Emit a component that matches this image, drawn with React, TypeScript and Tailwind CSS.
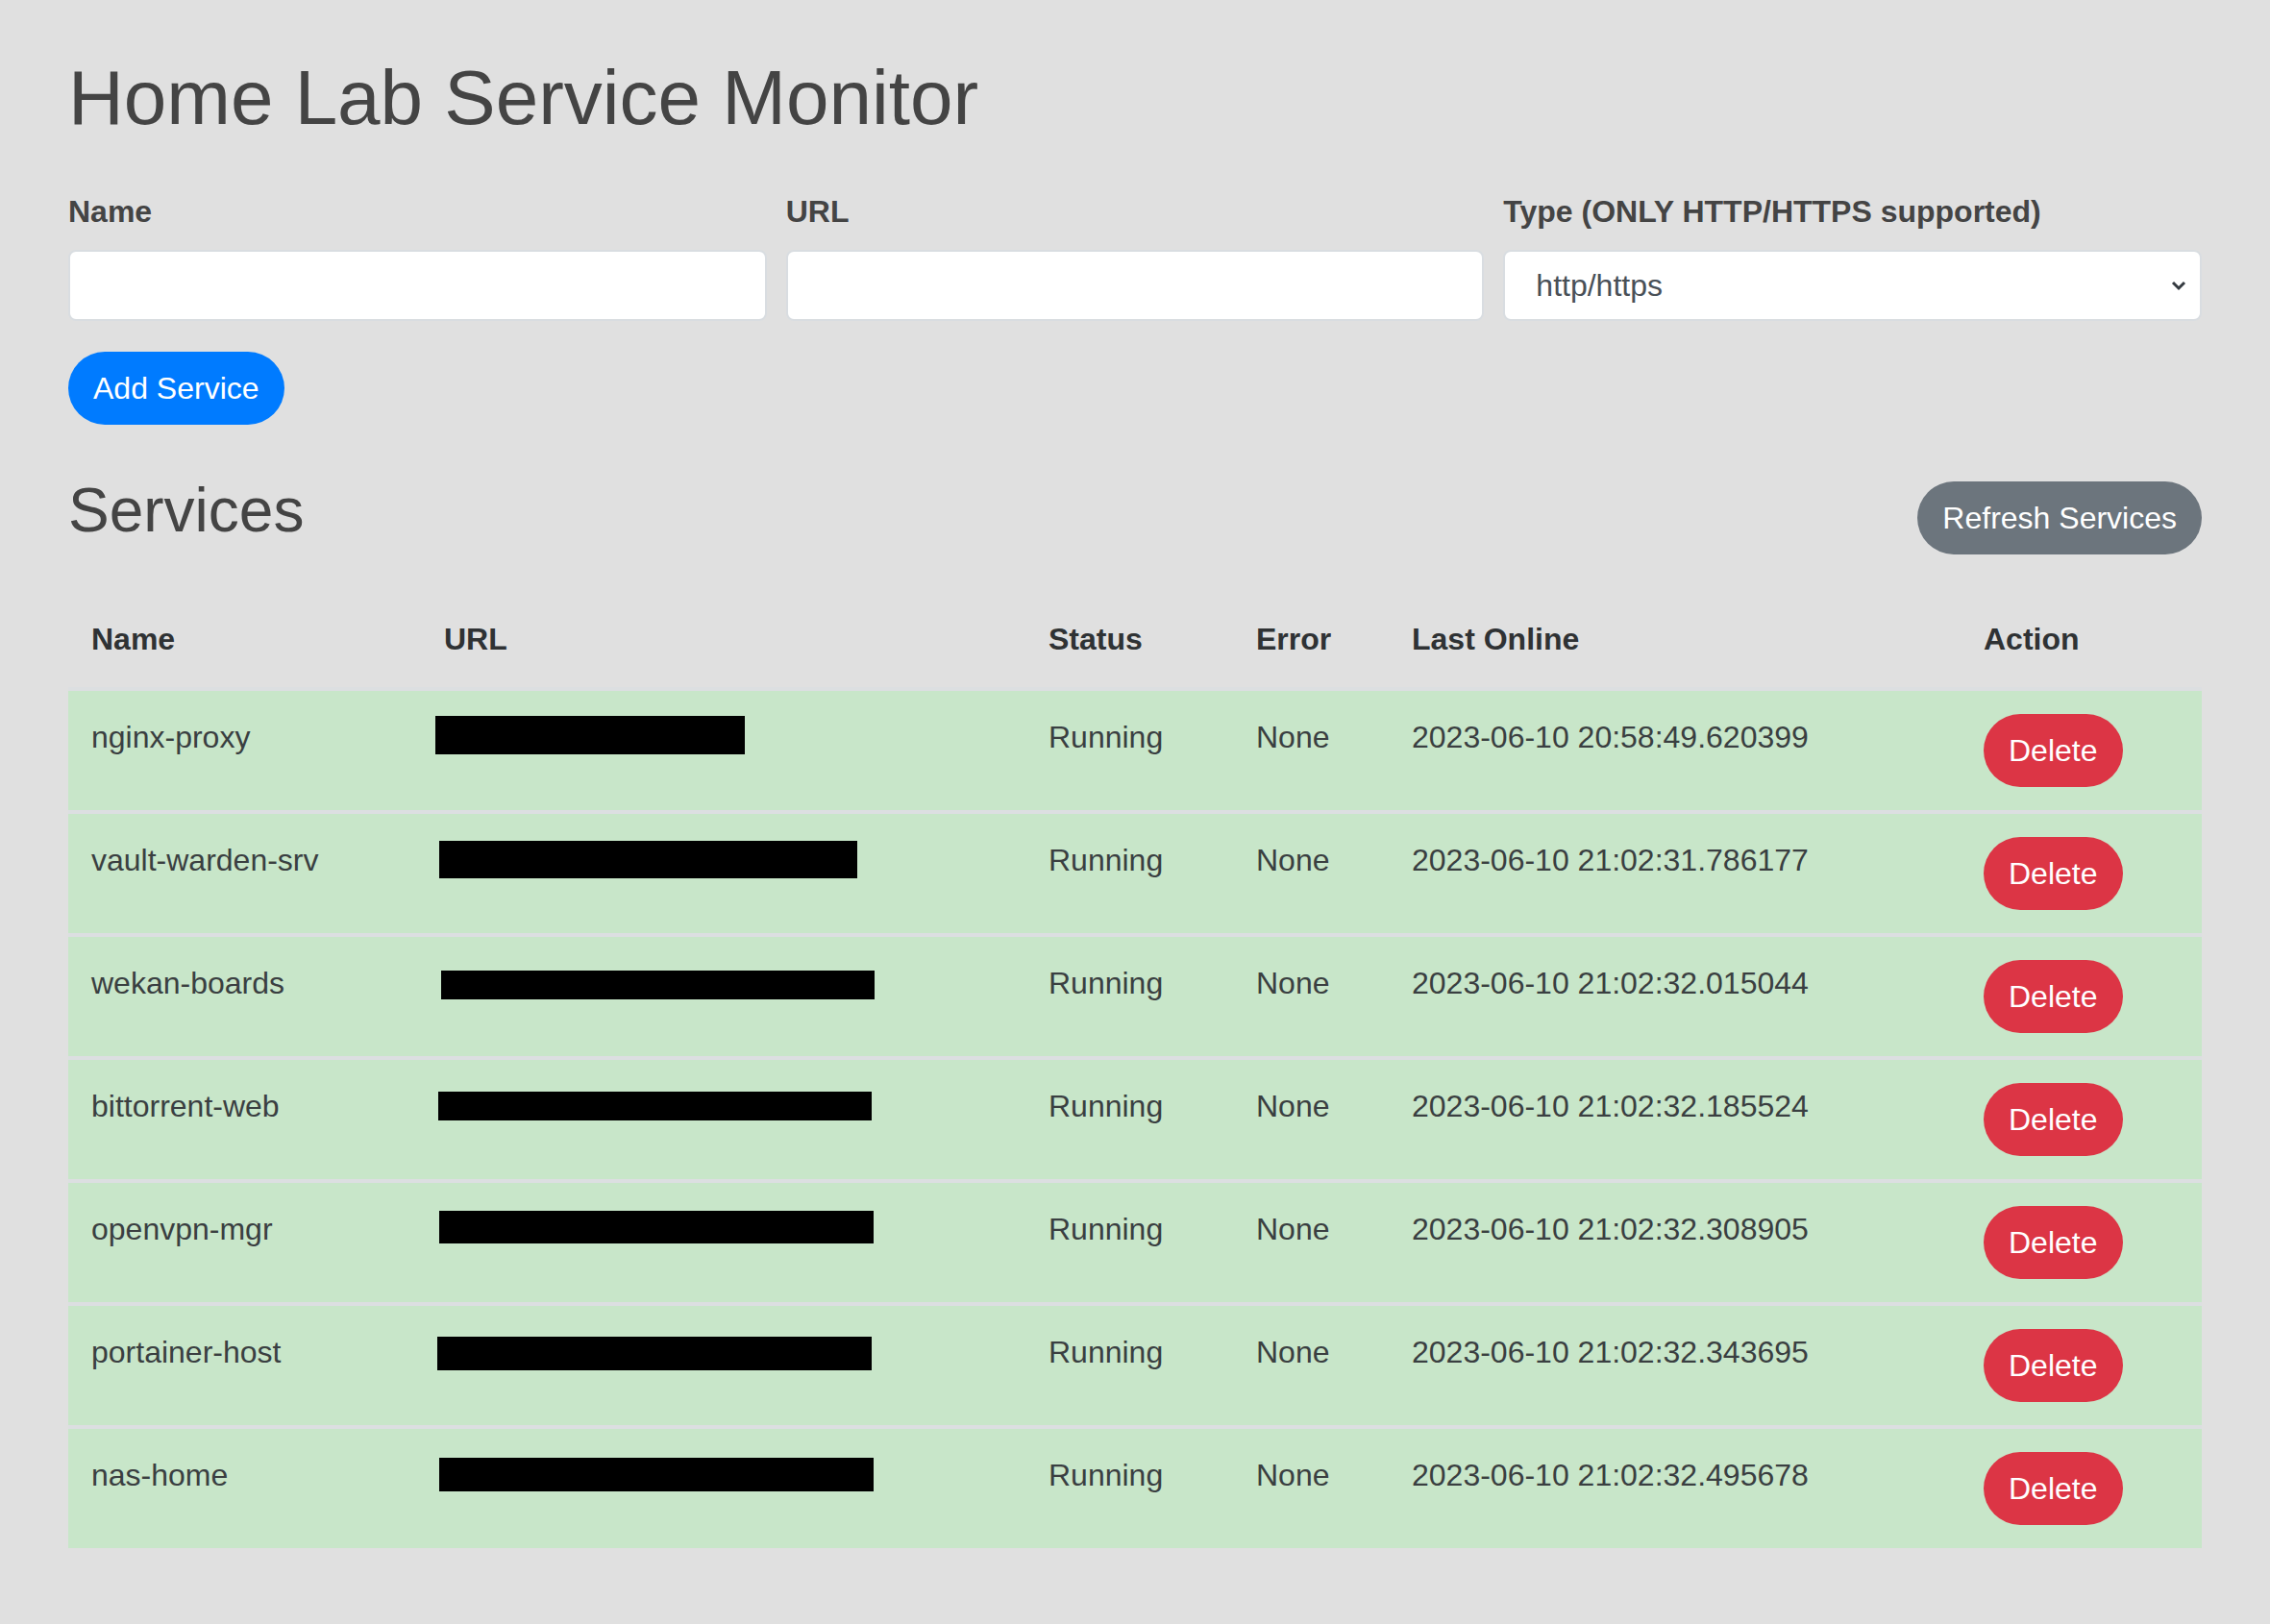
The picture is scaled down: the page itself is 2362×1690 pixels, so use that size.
type Service = {
  name: string;
  lastOnline: string;
  // redaction box over the URL: offsets from the cell content box
  mask: { x: number; y: number; w: number; h: number };
};

const SERVICES: Service[] = [
  { name: 'nginx-proxy', lastOnline: '2023-06-10 20:58:49.620399', mask: { x: -9, y: 2, w: 322, h: 40 } },
  { name: 'vault-warden-srv', lastOnline: '2023-06-10 21:02:31.786177', mask: { x: -5, y: 4, w: 435, h: 39 } },
  { name: 'wekan-boards', lastOnline: '2023-06-10 21:02:32.015044', mask: { x: -3, y: 11, w: 451, h: 30 } },
  { name: 'bittorrent-web', lastOnline: '2023-06-10 21:02:32.185524', mask: { x: -6, y: 9, w: 451, h: 30 } },
  { name: 'openvpn-mgr', lastOnline: '2023-06-10 21:02:32.308905', mask: { x: -5, y: 5, w: 452, h: 34 } },
  { name: 'portainer-host', lastOnline: '2023-06-10 21:02:32.343695', mask: { x: -7, y: 8, w: 452, h: 35 } },
  { name: 'nas-home', lastOnline: '2023-06-10 21:02:32.495678', mask: { x: -5, y: 6, w: 452, h: 35 } },
];

function Field({ label, children }: { label: string; children: React.ReactNode }) {
  return (
    <div className="flex flex-col">
      <label className="mb-[16px] text-[32px] leading-[48px] font-bold text-[#444]">{label}</label>
      {children}
    </div>
  );
}

function App() {
  return (
    <div className="min-h-screen bg-[#e0e0e0] font-['Liberation_Sans',Arial,sans-serif] text-[#444]">
      <div className="mx-auto w-[2220px] pt-[54px] pb-[60px]">
        <h1 className="mb-[16px] text-[80px] leading-[1.2] font-normal text-[#444]">Home Lab Service Monitor</h1>

        {/* add service form */}
        <form className="mt-[46px]" onSubmit={(e) => e.preventDefault()}>
          <div className="grid grid-cols-3 gap-x-[20px]">
            <Field label="Name">
              <input className="h-[74px] w-full rounded-[8px] border-2 border-[#d9dde1] bg-white px-[24px] text-[32px]" />
            </Field>
            <Field label="URL">
              <input className="h-[74px] w-full rounded-[8px] border-2 border-[#d9dde1] bg-white px-[24px] text-[32px]" />
            </Field>
            <Field label="Type (ONLY HTTP/HTTPS supported)">
              <div className="relative">
                <select className="h-[74px] w-full appearance-none rounded-[8px] border-2 border-[#d9dde1] bg-white pl-[32px] text-[32px] text-[#495057]">
                  <option>http/https</option>
                </select>
                <svg
                  className="pointer-events-none absolute top-1/2 right-[16px] h-[12px] w-[16px] -translate-y-1/2"
                  viewBox="0 0 16 12"
                  fill="none"
                  stroke="#343a40"
                  strokeWidth="3"
                >
                  <path d="M2 3l6 6 6-6" />
                </svg>
              </div>
            </Field>
          </div>
          <button
            type="submit"
            className="mt-[32px] h-[76px] rounded-full bg-[#007bff] px-[26px] text-[32px] leading-[48px] text-white"
          >
            Add Service
          </button>
        </form>

        {/* services header */}
        <div className="mt-[51px] flex items-center justify-between">
          <h2 className="mb-[16px] text-[64px] leading-[1.2] font-normal text-[#444]">Services</h2>
          <button className="h-[76px] rounded-full bg-[#6c757d] px-[26px] text-[32px] leading-[48px] text-white">
            Refresh Services
          </button>
        </div>

        <table className="mt-[29px] w-full table-fixed border-separate border-spacing-0 text-[32px] leading-[48px]">
          <thead>
            <tr className="text-left text-[#2f3234]">
              <th className="w-[367px] px-[24px] pt-[26px] pb-[26px] font-bold">Name</th>
              <th className="w-[629px] px-[24px] pt-[26px] pb-[26px] font-bold">URL</th>
              <th className="w-[216px] px-[24px] pt-[26px] pb-[26px] font-bold">Status</th>
              <th className="w-[162px] px-[24px] pt-[26px] pb-[26px] font-bold">Error</th>
              <th className="w-[595px] px-[24px] pt-[26px] pb-[26px] font-bold">Last Online</th>
              <th className="w-[251px] px-[24px] pt-[26px] pb-[26px] font-bold">Action</th>
            </tr>
          </thead>
          <tbody>
            {SERVICES.map((s) => (
              <tr key={s.name} className="bg-[#c8e6c9] align-top text-[#3a3f41]">
                <td className="border-t-4 border-[#dcdfe1] px-[24px] py-[24px]">{s.name}</td>
                <td className="border-t-4 border-[#dcdfe1] px-[24px] py-[24px]">
                  <span
                    className="block bg-black"
                    style={{ marginLeft: s.mask.x, marginTop: s.mask.y, width: s.mask.w, height: s.mask.h }}
                  />
                </td>
                <td className="border-t-4 border-[#dcdfe1] px-[24px] py-[24px]">Running</td>
                <td className="border-t-4 border-[#dcdfe1] px-[24px] py-[24px]">None</td>
                <td className="border-t-4 border-[#dcdfe1] px-[24px] py-[24px]">{s.lastOnline}</td>
                <td className="border-t-4 border-[#dcdfe1] px-[24px] py-[24px]">
                  <button className="block h-[76px] rounded-full bg-[#dc3545] px-[26px] text-[32px] leading-[48px] text-white">
                    Delete
                  </button>
                </td>
              </tr>
            ))}
          </tbody>
        </table>
      </div>
    </div>
  );
}

export default App;
